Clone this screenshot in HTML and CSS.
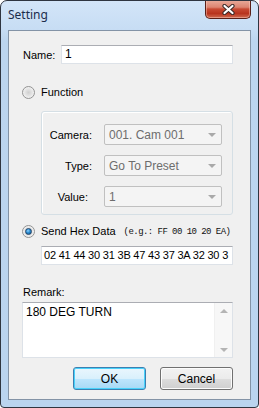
FILE: index.html
```html
<!DOCTYPE html>
<html>
<head>
<meta charset="utf-8">
<link rel="stylesheet" href="styles.css">
</head>
<body>
<div class="window">
  <div class="titlebar">
    <span class="title">Setting</span>
    <div class="close">
      <svg width="13" height="11" viewBox="0 0 13 11">
        <path d="M2.5 2 L10.5 9 M10.5 2 L2.5 9" stroke="#3a2a28" stroke-width="4.2" stroke-linecap="round"/>
        <path d="M2.5 2 L10.5 9 M10.5 2 L2.5 9" stroke="#ffffff" stroke-width="2.2" stroke-linecap="round"/>
      </svg>
    </div>
  </div>
  <div class="client">
    <div class="name-row">
      <span class="lbl">Name:</span>
      <div class="textbox name-box">1</div>
    </div>
    <div class="radio-row fn-row">
      <span class="radio"></span>
      <span class="rtext">Function</span>
    </div>
    <div class="group">
      <div class="field">
        <span class="flbl">Camera:</span>
        <div class="combo"><span class="ctext">001. Cam 001</span><span class="arrow"></span></div>
      </div>
      <div class="field">
        <span class="flbl">Type:</span>
        <div class="combo"><span class="ctext">Go To Preset</span><span class="arrow"></span></div>
      </div>
      <div class="field">
        <span class="flbl flbl-value">Value:</span>
        <div class="combo"><span class="ctext">1</span><span class="arrow"></span></div>
      </div>
    </div>
    <div class="radio-row hex-row">
      <span class="radio checked"></span>
      <span class="rtext">Send Hex Data</span>
      <span class="eg">(e.g.: FF 00 10 20 EA)</span>
    </div>
    <div class="textbox hex-box">02 41 44 30 31 3B 47 43 37 3A 32 30 3</div>
    <div class="remark-lbl">Remark:</div>
    <div class="memo">
      <span class="memo-text">180 DEG TURN</span>
      <div class="vscroll">
        <span class="up"></span>
        <span class="down"></span>
      </div>
    </div>
    <div class="buttons">
      <div class="btn default">OK</div>
      <div class="btn">Cancel</div>
    </div>
  </div>
</div>
</body>
</html>
```

FILE: styles.css
```css
html, body {
  margin: 0;
  padding: 0;
  background: #ffffff;
}

.window {
  width: 259px;
  height: 408px;
  box-sizing: border-box;
  border: 1px solid #2f3540;
  border-radius: 7px 7px 4px 4px;
  background: linear-gradient(180deg, #d3e5f8 0px, #c7ddf4 28px, #bcd5ef 40px, #bad4ef 100%);
  padding: 0 7px 7px 7px;
  display: flex;
  flex-direction: column;
  font-family: "Liberation Sans", Arial, sans-serif;
  font-size: 11px;
  color: #000;
  overflow: hidden;
}

.titlebar {
  height: 29px;
  display: flex;
  justify-content: space-between;
  align-items: flex-start;
  flex: none;
}

.title {
  font-family: "Noto Sans", "Open Sans", sans-serif;
  font-size: 12px;
  color: #1b2d4c;
  padding-top: 6px;
  line-height: 16px;
}

.close {
  width: 46px;
  height: 19px;
  margin-top: -1px;
  box-sizing: border-box;
  border: 1px solid #5a2018;
  border-top: none;
  border-radius: 0 0 5px 5px;
  background: linear-gradient(180deg, #e9ac9c 0%, #dc8571 40%, #c84a33 50%, #b8341e 75%, #cf6b50 100%);
  box-shadow: inset 0 0 0 1px rgba(255, 210, 200, 0.45);
  display: flex;
  align-items: center;
  justify-content: center;
}

.close svg {
  display: block;
}

.client {
  flex: 1;
  border: 1px solid #8393a6;
  background: #f0f0f0;
  padding: 0 17px 0 14px;
  display: flex;
  flex-direction: column;
}

.name-row {
  margin-top: 14px;
  height: 19px;
  display: flex;
  align-items: center;
}

.lbl {
  width: 38px;
  flex: none;
}

.textbox {
  box-sizing: border-box;
  height: 19px;
  background: #ffffff;
  border: 1px solid #dde2e8;
  border-top-color: #abadb3;
  font-size: 12px;
  line-height: 17px;
  padding-left: 3px;
  white-space: nowrap;
  overflow: hidden;
}

.name-box {
  flex: 1;
}

.radio-row {
  height: 13px;
  display: flex;
  align-items: center;
  margin-left: -1px;
}

.fn-row {
  margin-top: 22px;
}

.radio {
  width: 13px;
  height: 13px;
  box-sizing: border-box;
  border-radius: 50%;
  border: 1px solid #939393;
  background: radial-gradient(circle at 50% 50%, #cfcfcf 0%, #e4e4e4 45%, #f6f6f6 80%);
  margin-right: 6px;
  flex: none;
  position: relative;
}

.radio.checked::after {
  content: "";
  position: absolute;
  left: 2px;
  top: 2px;
  width: 7px;
  height: 7px;
  box-sizing: border-box;
  border-radius: 50%;
  border: 1px solid #23466b;
  background: radial-gradient(circle at 40% 35%, #8fd3ff 0%, #2a8bd0 45%, #0e4f86 100%);
}

.rtext {
  line-height: 13px;
}

.group {
  margin-top: 12px;
  margin-left: 18px;
  height: 104px;
  box-sizing: border-box;
  border: 1px solid #d5dfe5;
  border-radius: 3px;
  box-shadow: inset 1px 1px 0 #ffffff;
  padding: 12px 0 7px 0;
  display: flex;
  flex-direction: column;
  gap: 10px;
}

.field {
  height: 21px;
  display: flex;
  align-items: center;
}

.flbl {
  width: 50px;
  text-align: right;
  margin-right: 12px;
  flex: none;
}

.flbl-value {
  padding-right: 4px;
  width: 46px;
}

.combo {
  width: 118px;
  height: 21px;
  box-sizing: border-box;
  border: 1px solid #c0c0c0;
  border-radius: 2px;
  background: #f4f4f4;
  display: flex;
  align-items: center;
  justify-content: space-between;
  padding: 0 5px 0 4px;
  color: #6d6d6d;
  font-size: 12px;
}

.arrow {
  width: 0;
  height: 0;
  border-left: 4px solid transparent;
  border-right: 4px solid transparent;
  border-top: 4px solid #a9a9a9;
  margin-top: 1px;
}

.hex-row {
  margin-top: 10px;
}

.eg {
  font-family: "Liberation Mono", monospace;
  font-size: 9px;
  letter-spacing: -0.55px;
  margin-left: 8px;
  color: #111;
}

.hex-box {
  margin-top: 8px;
  margin-left: 18px;
  font-size: 11px;
  letter-spacing: -0.2px;
  padding-left: 2px;
}

.remark-lbl {
  margin-top: 21px;
  height: 13px;
  line-height: 13px;
}

.memo {
  margin-top: 3px;
  margin-left: -1px;
  height: 56px;
  box-sizing: border-box;
  background: #ffffff;
  border: 1px solid #dde2e8;
  border-top-color: #abadb3;
  display: flex;
  justify-content: space-between;
  font-size: 12px;
}

.memo-text {
  padding: 2px 0 0 3px;
  line-height: 15px;
}

.vscroll {
  width: 17px;
  background: #f7f7f7;
  border-left: 1px solid #f0f0f0;
  display: flex;
  flex-direction: column;
  justify-content: space-between;
  align-items: center;
  padding: 6px 0 5px 0;
}

.up {
  width: 0;
  height: 0;
  border-left: 4px solid transparent;
  border-right: 4px solid transparent;
  border-bottom: 4px solid #b4b4b4;
}

.down {
  width: 0;
  height: 0;
  border-left: 4px solid transparent;
  border-right: 4px solid transparent;
  border-top: 4px solid #b4b4b4;
}

.buttons {
  margin-top: 9px;
  display: flex;
  justify-content: flex-end;
  gap: 14px;
}

.btn {
  width: 73px;
  height: 23px;
  box-sizing: border-box;
  border: 1px solid #707070;
  border-radius: 3px;
  background: linear-gradient(180deg, #f2f2f2 0%, #ebebeb 50%, #dddddd 51%, #cfcfcf 100%);
  box-shadow: inset 0 0 0 1px #fcfcfc;
  display: flex;
  align-items: center;
  justify-content: center;
  font-size: 12px;
}

.btn.default {
  border-color: #3c7fb1;
  box-shadow: inset 0 0 0 1px #48d2fb;
  background: linear-gradient(180deg, #eaf6fd 0%, #d9f0fc 50%, #bee6fd 51%, #a7d9f5 100%);
}
```
